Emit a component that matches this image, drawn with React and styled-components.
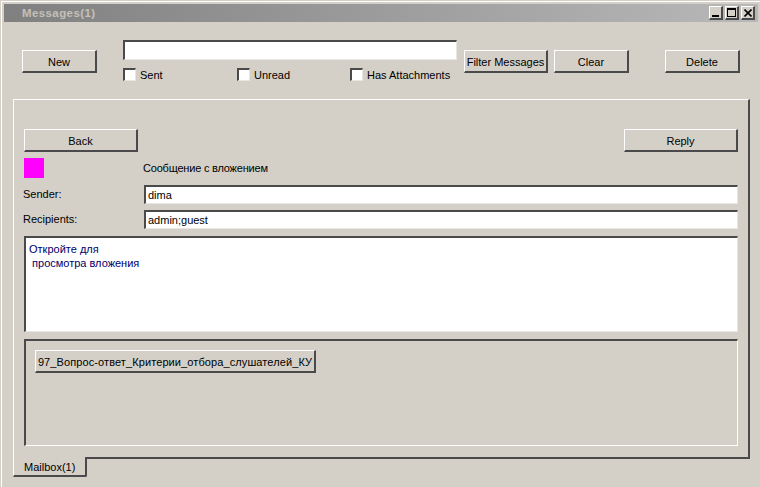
import React from 'react';
import styled, { createGlobalStyle, css } from 'styled-components';

const FONT = '"Liberation Sans", Arial, sans-serif';

const Global = createGlobalStyle`
  html, body { margin: 0; padding: 0; background: #d4d0c8; }
  body { width: 760px; height: 487px; overflow: hidden; font-family: ${FONT}; font-size: 11px; color: #000; }
  * { box-sizing: border-box; }
`;

const raised = css`
  background: #d4d0c8;
  border-style: solid;
  border-width: 1px 2px 2px 1px;
  border-color: #fff #4a4a4a #4a4a4a #fff;
`;
const sunken = css`
  background: #fff;
  border-style: solid;
  border-width: 2px 1px 1px 2px;
  border-color: #4a4a4a #e8e6e0 #e8e6e0 #4a4a4a;
`;

const Window = styled.div`
  width: 760px;
  height: 487px;
  padding: 4px 2px 0 4px;
  background: #d4d0c8;
  display: flex;
  flex-direction: column;
  box-shadow: inset 1px 1px 0 #d4d0c8, inset 2px 2px 0 #fff;
`;
const TitleBar = styled.div`
  height: 18px;
  flex: none;
  padding: 0 3px 0 18px;
  display: flex;
  align-items: center;
  justify-content: space-between;
  background: linear-gradient(90deg, #808080, #b8b8b8);
`;
const TitleText = styled.span`
  color: #c4c0b8;
  font: bold 11.5px ${FONT};
  letter-spacing: 0.4px;
`;
const WinButtons = styled.div`
  display: flex;
  gap: 2px;
`;
const WinButton = styled.div`
  ${raised}
  width: 14px;
  height: 14px;
  display: flex;
  align-items: center;
  justify-content: center;
`;
const Toolbar = styled.div`
  flex: none;
  height: 77px;
  display: flex;
  align-items: flex-start;
  padding: 18px 0 0 18px;
`;
const Btn = styled.button`
  ${raised}
  width: ${p => p.$w}px;
  height: 23px;
  margin: ${p => p.$m || 0};
  padding: 1px 0 0;
  flex: none;
  font: 11px ${FONT};
  color: #000;
  display: block;
  white-space: nowrap;
`;
const FilterColumn = styled.div`
  width: 334px;
  margin-left: 26px;
  flex: none;
`;
const TextLine = styled.div`
  ${sunken}
  height: ${p => p.$h || 20}px;
  padding: 1px 2px;
  flex: ${p => p.$flex ? 1 : 'none'};
  color: #000;
  font-size: 11px;
  line-height: 14px;
`;
const CheckRow = styled.div`
  margin-top: 8px;
  height: 13px;
  display: flex;
`;
const CheckItem = styled.label`
  width: ${p => p.$w}px;
  flex: none;
  display: flex;
  align-items: center;
  gap: 4px;
  font-size: 11px;
`;
const Box = styled.span`
  ${sunken}
  width: 13px;
  height: 13px;
  flex: none;
`;
const Pane = styled.div`
  flex: none;
  width: 737px;
  height: 358px;
  margin-left: 9px;
  padding: 29px 10px 0 10px;
  border-top: 1px solid #fff;
  border-left: 1px solid #fff;
  border-right: 2px solid #4a4a4a;
`;
const SpaceRow = styled.div`
  display: flex;
  justify-content: space-between;
`;
const SubjectRow = styled.div`
  display: flex;
  align-items: center;
  height: 20px;
  margin-top: 6px;
`;
const Swatch = styled.div`
  width: 20px;
  height: 20px;
  background: #ff00ff;
  flex: none;
`;
const Subject = styled.span`
  margin-left: 99px;
  letter-spacing: -0.2px;
`;
const FieldRow = styled.div`
  display: flex;
  align-items: center;
  margin-top: ${p => p.$top}px;
`;
const FieldLabel = styled.span`
  width: 121px;
  flex: none;
  margin: -1px 0 0 -1px;
`;
const Body = styled.div`
  ${sunken}
  margin-top: 7px;
  height: 96px;
  padding: 4px 3px;
  color: #00006a;
  line-height: 14px;
  white-space: pre;
`;
const Attachments = styled.div`
  margin-top: 7px;
  height: 107px;
  padding: 9px;
  border-style: solid;
  border-width: 2px 1px 1px 2px;
  border-color: #4a4a4a #fff #fff #4a4a4a;
`;
const AttachmentLabel = styled.span`
  letter-spacing: 0.1px;
`;
const TabStrip = styled.div`
  flex: none;
  display: flex;
  width: 737px;
  margin-left: 9px;
  height: 20px;
`;
const Tab = styled.div`
  width: 74px;
  flex: none;
  border-left: 1px solid #fff;
  border-right: 2px solid #4a4a4a;
  border-bottom: 2px solid #4a4a4a;
  border-radius: 0 0 2px 0;
  padding: 4px 0 0 10px;
`;
const TabFill = styled.div`
  flex: 1;
  height: 2px;
  background: #4a4a4a;
`;

const Min = () => <svg width="8" height="8" viewBox="0 0 8 8"><rect x="0" y="6" width="7" height="2" fill="#000"/></svg>;
const Max = () => <svg width="9" height="9" viewBox="0 0 9 9"><path d="M0 0h9v9H0zM1 2v6h7V2z" fill="#000" fillRule="evenodd"/></svg>;
const Close = () => <svg width="8" height="8" viewBox="0 0 8 8"><path d="M0.5 0.5L7.5 7.5M7.5 0.5L0.5 7.5" stroke="#000" strokeWidth="1.6"/></svg>;

export default function App() {
  return (
    <>
      <Global />
      <Window>
        <TitleBar>
          <TitleText>Messages(1)</TitleText>
          <WinButtons>
            <WinButton><Min /></WinButton>
            <WinButton><Max /></WinButton>
            <WinButton><Close /></WinButton>
          </WinButtons>
        </TitleBar>
        <Toolbar>
          <Btn $w={75} $m="10px 0 0 0">New</Btn>
          <FilterColumn>
            <TextLine />
            <CheckRow>
              <CheckItem $w={114}><Box />Sent</CheckItem>
              <CheckItem $w={113}><Box />Unread</CheckItem>
              <CheckItem $w={107}><Box />Has Attachments</CheckItem>
            </CheckRow>
          </FilterColumn>
          <Btn $w={84} $m="10px 0 0 7px">Filter Messages</Btn>
          <Btn $w={75} $m="10px 0 0 6px">Clear</Btn>
          <Btn $w={75} $m="10px 0 0 36px">Delete</Btn>
        </Toolbar>
        <Pane>
          <SpaceRow>
            <Btn $w={114}>Back</Btn>
            <Btn $w={114}>Reply</Btn>
          </SpaceRow>
          <SubjectRow>
            <Swatch />
            <Subject>Сообщение с вложением</Subject>
          </SubjectRow>
          <FieldRow $top={7}>
            <FieldLabel>Sender:</FieldLabel>
            <TextLine $flex $h={19}>dima</TextLine>
          </FieldRow>
          <FieldRow $top={6}>
            <FieldLabel>Recipients:</FieldLabel>
            <TextLine $flex $h={19}>admin;guest</TextLine>
          </FieldRow>
          <Body>{'Откройте для\n просмотра вложения'}</Body>
          <Attachments>
            <Btn $w={281}><AttachmentLabel>97_Вопрос-ответ_Критерии_отбора_слушателей_КУ</AttachmentLabel></Btn>
          </Attachments>
        </Pane>
        <TabStrip>
          <Tab>Mailbox(1)</Tab>
          <TabFill />
        </TabStrip>
      </Window>
    </>
  );
}
